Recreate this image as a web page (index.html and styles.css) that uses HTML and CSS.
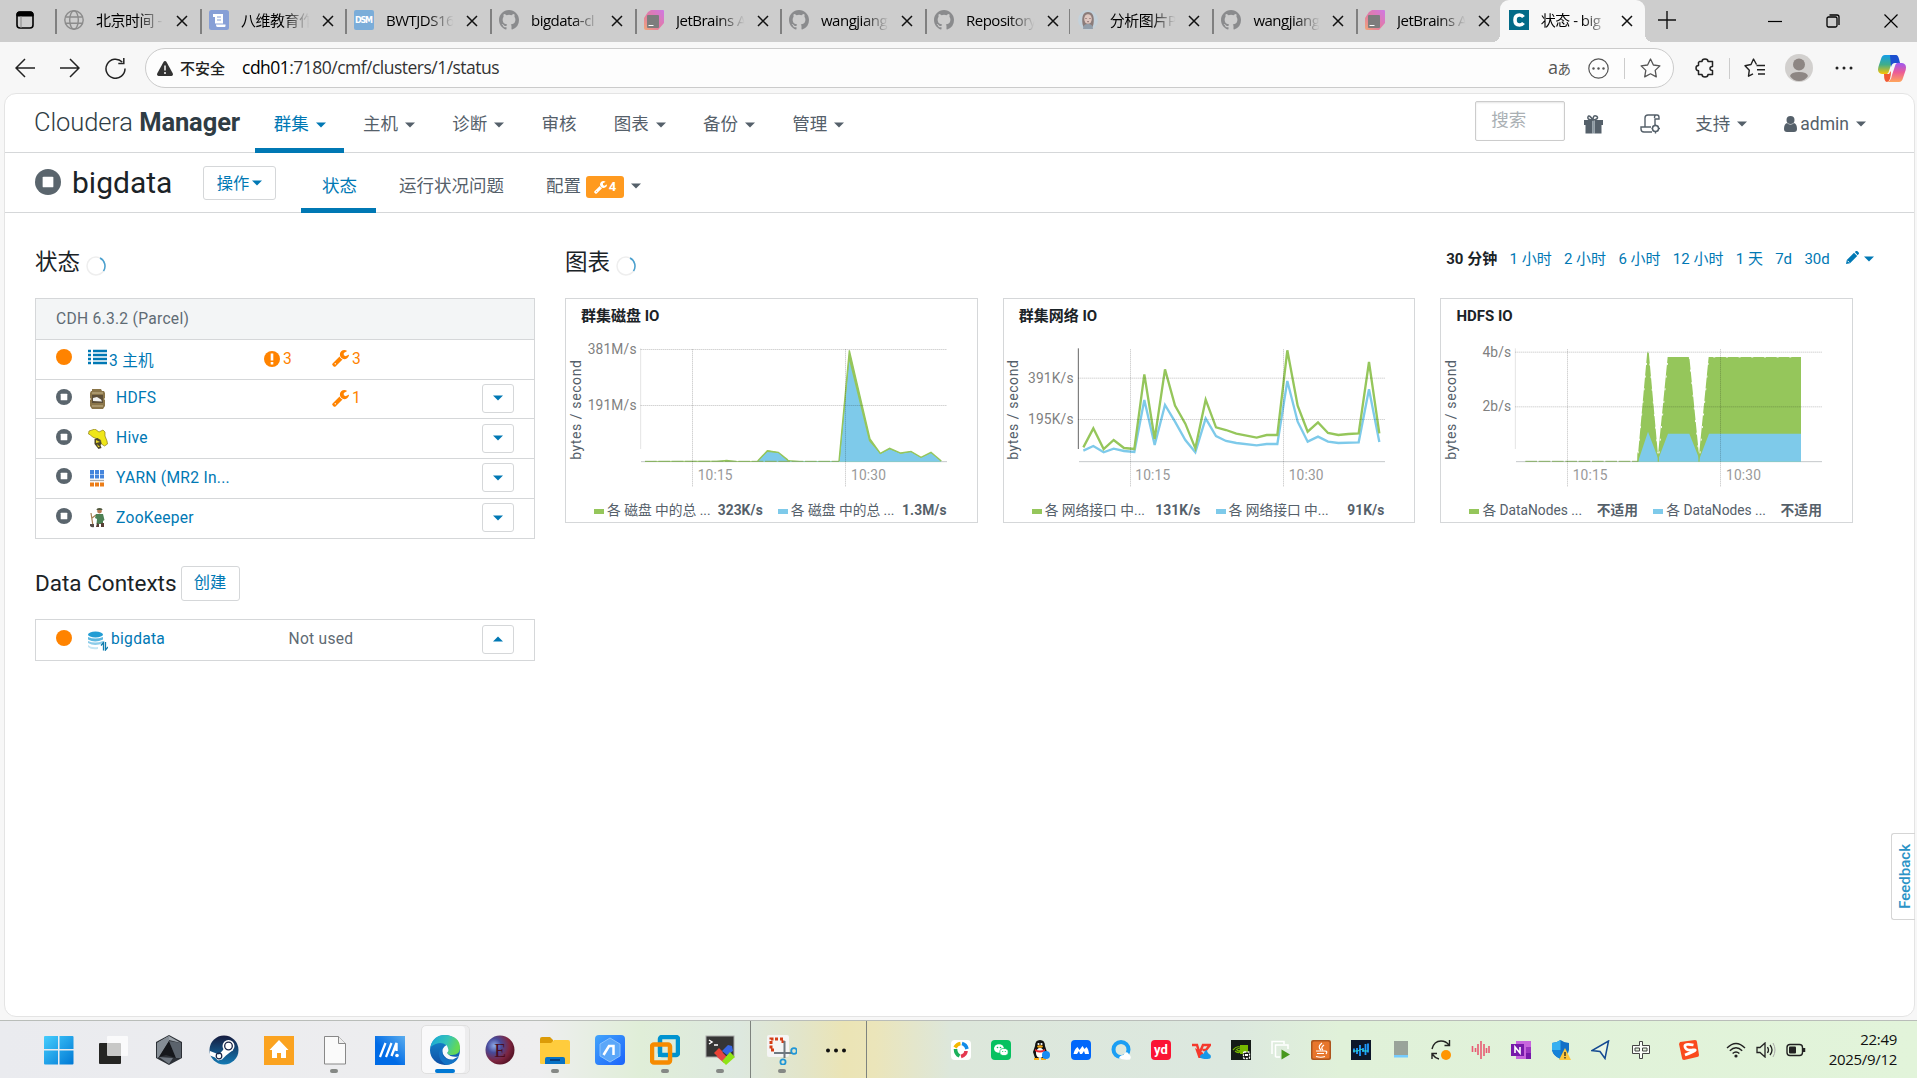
FILE: index.html
```html
<!DOCTYPE html>
<html lang="zh-CN">
<head>
<meta charset="utf-8">
<title>状态 - bigdata</title>
<link rel="stylesheet" href="styles.css">
</head>
<body>
<svg class="defs" width="0" height="0">
  <symbol id="github" viewBox="0 0 16 16"><path fill="#8a8b8d" d="M8 0C3.58 0 0 3.58 0 8c0 3.54 2.29 6.53 5.47 7.59.4.07.55-.17.55-.38 0-.19-.01-.82-.01-1.49-2.01.37-2.53-.49-2.69-.94-.09-.23-.48-.94-.82-1.13-.28-.15-.68-.52-.01-.53.63-.01 1.08.58 1.23.82.72 1.21 1.87.87 2.33.66.07-.52.28-.87.51-1.07-1.78-.2-3.64-.89-3.64-3.95 0-.87.31-1.59.82-2.15-.08-.2-.36-1.02.08-2.12 0 0 .67-.21 2.2.82a7.6 7.6 0 0 1 4 0c1.53-1.04 2.2-.82 2.2-.82.44 1.1.16 1.92.08 2.12.51.56.82 1.27.82 2.15 0 3.07-1.87 3.75-3.65 3.95.29.25.54.73.54 1.48 0 1.07-.01 1.93-.01 2.2 0 .21.15.46.55.38A8 8 0 0 0 16 8c0-4.42-3.58-8-8-8z"/></symbol>
  <symbol id="jetbrains" viewBox="0 0 20 20"><linearGradient id="jb" x1="0" y1="1" x2="1" y2="0"><stop offset="0" stop-color="#efa878"/><stop offset=".45" stop-color="#e27ba2"/><stop offset="1" stop-color="#cf78e4"/></linearGradient><path fill="url(#jb)" d="M7 0h12q1 0 1 1v12l-6 7H2q-2 0-2-2V8l4-6z"/><rect x="3" y="5" width="12" height="13" rx="1" fill="#7d7d7d"/><path d="M4.500 15.500h5" stroke="#fff" stroke-width="1"/></symbol>
  <symbol id="close" viewBox="0 0 12 12"><path d="M1 1l10 10M11 1L1 11" stroke="#111" stroke-width="1.500" fill="none"/></symbol>
  <symbol id="stopped" viewBox="0 0 16 16"><circle cx="8" cy="8" r="8" fill="#5a656d"/><rect x="4.700" y="4.700" width="6.600" height="6.600" rx=".6" fill="#fff"/></symbol>
  <symbol id="dot" viewBox="0 0 16 16"><circle cx="8" cy="8" r="8" fill="#ff8300"/></symbol>
  <symbol id="wrench" viewBox="0 0 1664 1664"><path fill="currentColor" d="M384 1344q0-26-19-45t-45-19-45 19-19 45 19 45 45 19 45-19 19-45zm644-420l-682 682q-37 37-90 37-52 0-91-37L59 1498q-38-36-38-90 0-53 38-91l681-681q39 98 114.500 173.500T1028 924zm634-435q0 39-23 106-47 134-164.500 217.500T1216 896q-185 0-316.500-131.500T768 448t131.500-316.500T1216 0q58 0 121.500 16.500T1445 63q16 11 16 28t-16 28l-293 169v224l193 107q5-3 79-48.500t135.500-81T1630 454q15 0 23.500 10t8.500 25z"/></symbol>
  <symbol id="caret" viewBox="0 0 10 6"><path fill="currentColor" d="M0 .5h10L5 5.500z"/></symbol>
</svg>

<header class="tabstrip">
  <div class="tab-menu"><svg width="18" height="18" viewBox="0 0 18 18"><rect x="1" y="1" width="16" height="16" rx="3" fill="none" stroke="#000" stroke-width="1.600"/><path d="M1 5V3q0-2 2-2h12q2 0 2 2v2z" stroke="#000" fill="#000"/><path d="M5 5v12" stroke="#888" stroke-width="1"/></svg></div>
  <div class="tab"><svg class="fav" viewBox="0 0 20 20"><g fill="none" stroke="#8b8b8b" stroke-width="1.400"><circle cx="10" cy="10" r="9.200"/><ellipse cx="10" cy="10" rx="4.300" ry="9.200"/><path d="M1.500 7h17M1.500 13.200h17"/></g></svg><span class="label">北京时间 -</span><svg class="x"><use href="#close"/></svg></div>
  <div class="tab"><svg class="fav" viewBox="0 0 20 20"><rect width="20" height="20" rx="2.500" fill="#879fd6"/><path d="M4 4h10v9.500H6V7H4zM7 14.500h9.500V16q0 1-1 1h-7Q7 17 7 15z" fill="#fff"/><path d="M8 7h4M8 10h4" stroke="#879fd6"/></svg><span class="label">八维教育作</span><svg class="x"><use href="#close"/></svg></div>
  <div class="tab"><svg class="fav" viewBox="0 0 20 20"><rect width="20" height="20" rx="2" fill="#7badd9"/><text x="10" y="13" text-anchor="middle" textLength="18" class="dsm">DSM</text></svg><span class="label">BWTJDS16</span><svg class="x"><use href="#close"/></svg></div>
  <div class="tab"><svg class="fav"><use href="#github"/></svg><span class="label">bigdata-cl</span><svg class="x"><use href="#close"/></svg></div>
  <div class="tab"><svg class="fav"><use href="#jetbrains"/></svg><span class="label">JetBrains A</span><svg class="x"><use href="#close"/></svg></div>
  <div class="tab"><svg class="fav"><use href="#github"/></svg><span class="label">wangjiang</span><svg class="x"><use href="#close"/></svg></div>
  <div class="tab"><svg class="fav"><use href="#github"/></svg><span class="label">Repository</span><svg class="x"><use href="#close"/></svg></div>
  <div class="tab"><svg class="fav" viewBox="0 0 20 20"><circle cx="10" cy="10" r="10" fill="#c4d1da"/><path d="M4.500 14q-1.500-12 5.500-12t5.500 12l-1 3H5.500z" fill="#8b7c7a"/><ellipse cx="10" cy="9" rx="3.800" ry="4.800" fill="#dec7c0"/><path d="M5 19q0-5 5-5t5 5z" fill="#929eaa"/><path d="M7.500 8.500h1M11.500 8.500h1M9.300 11.700h1.500" stroke="#74575a"/></svg><span class="label">分析图片P</span><svg class="x"><use href="#close"/></svg></div>
  <div class="tab"><svg class="fav"><use href="#github"/></svg><span class="label">wangjiang</span><svg class="x"><use href="#close"/></svg></div>
  <div class="tab"><svg class="fav"><use href="#jetbrains"/></svg><span class="label">JetBrains A</span><svg class="x"><use href="#close"/></svg></div>
  <div class="tab active"><svg class="fav" viewBox="0 0 20 20"><rect width="20" height="20" fill="#036b88"/><path d="M14.500 7Q13 5 10.500 5 6 5 6 10t4.500 5q2.500 0 4-2" fill="none" stroke="#fff" stroke-width="3.600"/></svg><span class="label">状态 - big</span><svg class="x"><use href="#close"/></svg></div>
  <svg class="newtab" width="18" height="18" viewBox="0 0 18 18"><path d="M9 0v18M0 9h18" stroke="#111" stroke-width="1.400"/></svg>
  <div class="winctl">
    <svg width="14" height="14" viewBox="0 0 14 14"><path d="M0 7.500h14" stroke="#000" stroke-width="1.200"/></svg>
    <svg width="14" height="14" viewBox="0 0 14 14"><g fill="none" stroke="#000" stroke-width="1.300"><rect x="1" y="3" width="10" height="10" rx="1.500"/><path d="M3.500 1h7.500q2 0 2 2v8"/></g></svg>
    <svg width="14" height="14" viewBox="0 0 14 14"><path d="M.5.5l13 13M13.500.5l-13 13" stroke="#000" stroke-width="1.200"/></svg>
  </div>
</header>

<div class="toolbar">
  <div class="navbtns">
    <svg width="20" height="20" viewBox="0 0 20 20"><path d="M20 10H1M10 1L1 10l9 9"/></svg>
    <svg width="20" height="20" viewBox="0 0 20 20"><path d="M0 10h19M10 1l9 9-9 9"/></svg>
    <svg width="21" height="21" viewBox="0 0 21 21"><path d="M20 10.500A9.500 9.500 0 1 1 17.200 4M18.800 0v5.500h-5.500"/></svg>
  </div>
  <div class="omnibox">
    <svg width="16" height="15" viewBox="0 0 16 15"><path d="M8 0q1 0 1.500.9l6.200 11.400q.8 2.200-1.200 2.700H1.500q-2-.5-1.200-2.700L6.500.9Q7 0 8 0z" fill="#333"/><path d="M8 4.500v5M8 11v2" stroke="#fff" stroke-width="1.500"/></svg>
    <span class="insecure">不安全</span>
    <span class="url">cdh01<em>:7180/cmf/clusters/1/status</em></span>
    <span class="translate">a<small>あ</small></span>
    <svg class="dots" width="21" height="21" viewBox="0 0 21 21"><circle cx="10.500" cy="10.500" r="9.700" fill="none" stroke="#555" stroke-width="1.200"/><g fill="#555"><circle cx="5.500" cy="10.500" r="1.200"/><circle cx="10.500" cy="10.500" r="1.200"/><circle cx="15.500" cy="10.500" r="1.200"/></g></svg>
    <i class="bar"></i>
    <svg width="21" height="20" viewBox="0 0 21 20"><path d="M10.500 1l2.900 6 6.500.9-4.700 4.500 1.100 6.500-5.800-3.100-5.800 3.100 1.100-6.500L1.100 7.900 7.600 7z" fill="none" stroke="#555" stroke-width="1.300" stroke-linejoin="round"/></svg>
  </div>
  <div class="tools">
    <svg width="20" height="20" viewBox="0 0 20 20"><path d="M4.500 3.500H7Q7 1 10 1t3 2.500h4.500v5q-2.500 0-2.500 2t2.500 2v4H13Q13 19 10 19t-3-2.500H3.500v-3.800Q1 12.500 1 10t2.500-2.500V4.500z" fill="none" stroke="#222" stroke-width="1.500" stroke-linejoin="round"/></svg>
    <i class="bar"></i>
    <svg width="21" height="20" viewBox="0 0 21 20"><g fill="none" stroke="#222" stroke-width="1.400" stroke-linejoin="round"><path d="M12.500 6.500L9.500 1 7 6.500 1 7.700l4.300 4.500-.8 6L9 15.800M12.500 7.500H21M13 11.800h8M14 16h7"/></g></svg>
    <svg width="28" height="28" viewBox="0 0 28 28"><circle cx="14" cy="14" r="14" fill="#d2d0ce"/><circle cx="14" cy="10.500" r="6" fill="#8d8683"/><path d="M5 22q1-4 9-4t9 4q-3 5-9 5t-9-5z" fill="#8d8683"/></svg>
    <svg width="18" height="4" viewBox="0 0 18 4"><g fill="#222"><circle cx="2" cy="2" r="1.500"/><circle cx="9" cy="2" r="1.500"/><circle cx="16" cy="2" r="1.500"/></g></svg>
    <svg width="28" height="27" viewBox="0 0 28 27"><defs><linearGradient id="c1" x1="0" y1="0" x2="0" y2="1"><stop offset="0" stop-color="#149ee9"/><stop offset=".5" stop-color="#3fae8a"/><stop offset="1" stop-color="#ffc400"/></linearGradient><linearGradient id="c2" x1="0" y1="0" x2="0" y2="1"><stop offset="0" stop-color="#9b58f4"/><stop offset=".5" stop-color="#ec5c96"/><stop offset="1" stop-color="#ffa65b"/></linearGradient></defs><path d="M7 0h12q-4 1-5 7l-3 9q-1 4-5 3H4q-6-1-3-9l2-6q1-4 4-4z" fill="url(#c1)"/><path d="M12 0h6q2 0 3 4l1 4h-5q-3 0-4 4z" fill="#1c50d0"/><path d="M21 27H9q4-1 5-7l3-9q1-4 5-3h2q6 1 3 9l-2 6q-1 4-4 4z" fill="url(#c2)"/><path d="M6 19h5l2-3q0 10-4 11-3 0-3-8z" fill="#f15a35"/></svg>
  </div>
</div>

<main class="page">
  <nav class="topnav">
    <div class="brand"><span>Cloudera</span> <b>Manager</b></div>
    <a class="on">群集<svg class="caret"><use href="#caret"/></svg></a>
    <a>主机<svg class="caret"><use href="#caret"/></svg></a>
    <a>诊断<svg class="caret"><use href="#caret"/></svg></a>
    <a>审核</a>
    <a>图表<svg class="caret"><use href="#caret"/></svg></a>
    <a>备份<svg class="caret"><use href="#caret"/></svg></a>
    <a>管理<svg class="caret"><use href="#caret"/></svg></a>
    <div class="right">
      <div class="search">搜索</div>
      <svg class="gift" width="19" height="19" viewBox="0 0 19 19"><path d="M9 5Q3 5 4 2t5 3Q9-1 13 1.500 15 4 9 5z" fill="none" stroke="#55606a" stroke-width="1.500"/><path d="M0 5h8.500v13.500H1.500V10H0zM10.500 5H19v5h-1.500v8.500h-7z" fill="#55606a"/><path d="M8.500 6h2v12.500h-2z" fill="#8996a0"/></svg>
      <svg class="scroll" width="20" height="20" viewBox="0 0 20 20"><g fill="none" stroke="#55606a" stroke-width="1.400"><path d="M5 13V4q0-3 3-3h9q2 0 2 2.500V5h-4v7M8 1h8q-1.500 0-1.500 3M5 13H1v2q0 3 3 3h8M1 13h10"/><circle cx="15.500" cy="14.500" r="3"/><path d="M15.500 10.500v1M15.500 17.500v2M11.500 14.500h1M18.500 14.500h1.500M12.700 11.700l1 1M18.300 17.300l-1-1M18.300 11.700l-1 1M12.700 17.300l1-1"/></g></svg>
      <span class="support">支持<svg class="caret"><use href="#caret"/></svg></span>
      <span class="user"><svg width="13" height="16" viewBox="0 0 13 16"><circle cx="6.500" cy="4" r="4" fill="#55606a"/><path d="M3 7q3.500 3 7 0 3 1 3 6 0 3-3 3H3q-3 0-3-3 0-5 3-6z" fill="#55606a"/></svg>admin<svg class="caret"><use href="#caret"/></svg></span>
    </div>
  </nav>
  <div class="subnav">
    <svg class="state" width="26" height="26"><use href="#stopped"/></svg>
    <h1>bigdata</h1>
    <button class="btn actions">操作<svg class="caret"><use href="#caret"/></svg></button>
    <a class="on">状态</a>
    <a class="health">运行状况问题</a>
    <a class="config">配置<span class="badge"><svg width="13" height="13"><use href="#wrench"/></svg>4</span><svg class="caret"><use href="#caret"/></svg></a>
  </div>

  <div class="content">
    <section class="left">
      <h2>状态 <svg class="spin" viewBox="0 0 20 20"><circle cx="10" cy="10" r="9" fill="none" stroke="#eeeeee" stroke-width="1.500"/><path d="M14 2a9 9 0 0 1 3.500 13" fill="none" stroke="#4aa0cf" stroke-width="1.500"/></svg></h2>
      <div class="table">
        <div class="row head">CDH 6.3.2 (Parcel)</div>
        <div class="row">
          <svg class="st"><use href="#dot"/></svg>
          <svg class="ic list" viewBox="0 0 19 16"><path d="M0 2h3M5 2h14M0 6h3M5 6h14M0 10h3M5 10h14M0 14h3M5 14h14" stroke="#0078b4" stroke-width="2.500"/></svg>
          <a class="hosts">3 主机</a>
          <span class="alert"><svg width="16" height="16" viewBox="0 0 16 16"><circle cx="8" cy="8" r="8" fill="#ff8300"/><path d="M8 2.500v7M8 11v2.500" stroke="#fff" stroke-width="2.600"/></svg>3</span>
          <span class="cfg"><svg width="17" height="17"><use href="#wrench"/></svg>3</span>
        </div>
        <div class="row">
          <svg class="st"><use href="#stopped"/></svg>
          <svg class="ic" viewBox="0 0 20 20"><path d="M4 0h9l1 2h2l1 2v5l-1 1 1 1v6l-2 3H4l-2-3v-6l1-1-1-1V4l1-2h1z" fill="#8a7549"/><path d="M4 3h11v2H4zM4 16h11v2H4z" fill="#a9966b"/><path d="M4 6h11v8H4z" fill="#5c4e38"/><path d="M5 12V9l4-1 4 2.500 1 2z" fill="#f1f1ef"/></svg>
          <a>HDFS</a>
          <span class="cfg"><svg width="17" height="17"><use href="#wrench"/></svg>1</span>
          <button class="drop"><svg class="caret"><use href="#caret"/></svg></button>
        </div>
        <div class="row">
          <svg class="st"><use href="#stopped"/></svg>
          <svg class="ic" viewBox="0 0 20 20"><path d="M1 2l6-2 4 3 4-2 2 2v4l2 5 .5 3-3 2-3-2-1-4-3-1-5-2-2-2-2-1z" fill="#efe619" stroke="#8b7d16" stroke-width=".7"/><path d="M6.500 10l3-1 3 2 1 4-1 1 1 3-3 1-4-5z" fill="#4e4628"/><path d="M8 11l4 2-4 1zM9 15l3 3h-2z" fill="#e8d928"/></svg>
          <a>Hive</a>
          <button class="drop"><svg class="caret"><use href="#caret"/></svg></button>
        </div>
        <div class="row">
          <svg class="st"><use href="#stopped"/></svg>
          <svg class="ic" viewBox="0 0 20 20"><g fill="#4585dc"><path d="M2 2h4v4H2zM7 2h4v4H7zM12 2h4v4h-4zM2 6.500h4v4H2zM7 6.500h4v4H7zM12 6.500h4v4h-4z"/></g><path d="M2 12.500h14" stroke="#aaa" stroke-width="1.300"/><path d="M2 14.500h4v4H2zM7 14.500h4v4H7zM12 14.500h4v4h-4z" fill="#ec7d17"/></svg>
          <a>YARN (MR2 In...</a>
          <button class="drop"><svg class="caret"><use href="#caret"/></svg></button>
        </div>
        <div class="row">
          <svg class="st"><use href="#stopped"/></svg>
          <svg class="ic" viewBox="0 0 20 20"><path d="M3 5l2 13M8 7L4 10" stroke="#a77c50" stroke-width="1.200"/><circle cx="11.500" cy="3" r="2.400" fill="#b77a55"/><path d="M8.500 2q0-2 3-2t3 2z" fill="#515a40"/><path d="M8 6h7l1.500 6-1.500 1v3H8.500l.5-5-2-1z" fill="#4d8054"/><path d="M9 15l-1 4h3v-3zM13 15v4h3v-4z" fill="#583e35"/><path d="M2 16h4v3q-2 1-4-1z" fill="#554c48"/></svg>
          <a>ZooKeeper</a>
          <button class="drop"><svg class="caret"><use href="#caret"/></svg></button>
        </div>
      </div>
      <h2 class="ctx">Data Contexts <button class="btn">创建</button></h2>
      <div class="table">
        <div class="row">
          <svg class="st"><use href="#dot"/></svg>
          <svg class="ic db" viewBox="0 0 20 20"><path d="M0 14v2q3 3 10 2v-2q-7 1-10-2z" fill="#c4e5f3"/><path d="M0 10v2q7 4 15 0v-2q-8 3-15 0z" fill="#8bcbe9"/><path d="M0 6v2.500q7 4 15 0V6q-8 3-15 0z" fill="#5db7df"/><ellipse cx="7.500" cy="3.500" rx="7.500" ry="3" fill="#239dd4"/><path d="M15.500 19.500v-8l-2.500 3M17.500 11v8l2.500-3" fill="none" stroke="#0e7cae" stroke-width="1.300"/></svg>
          <a class="bd">bigdata</a>
          <span class="unused">Not used</span>
          <button class="drop up"><svg class="caret"><use href="#caret"/></svg></button>
        </div>
      </div>
    </section>

    <section class="charts">
      <div class="chead">
        <h2>图表 <svg class="spin" viewBox="0 0 20 20"><circle cx="10" cy="10" r="9" fill="none" stroke="#eeeeee" stroke-width="1.500"/><path d="M14 2a9 9 0 0 1 3.500 13" fill="none" stroke="#4aa0cf" stroke-width="1.500"/></svg></h2>
        <div class="ranges"><b>30 分钟</b><a>1 小时</a><a>2 小时</a><a>6 小时</a><a>12 小时</a><a>1 天</a><a>7d</a><a>30d</a>
          <span class="edit"><svg width="13" height="13" viewBox="0 0 13 13"><path d="M0 13l.8-4L8 1.800 11.200 5 4 12.200zM8.800 1L10 0q.8-.3 1.500.3l1.200 1.200q.6.700 0 1.500l-1 1.200z" fill="#0078b4"/><path d="M1.600 9.800l1.600 1.600" stroke="#fff"/></svg><svg class="caret"><use href="#caret"/></svg></span></div>
      </div>
      <div class="cards">
        <article class="card">
          <h3>群集磁盘 IO</h3>
          <svg class="plot" viewBox="48 300 1236 480">
            <path class="axis faint" d="M272 340V642"/><path class="axis" d="M273 680H1191"/>
            <path fill="#95c65b" d="M285 680V678L500 677 530 674 560 678H623L652 646 685 652 714 675 750 678H867L898 346 960 612 991 655 1019 640 1052 654 1083 649 1113 667 1143 652 1174 680z"/>
            <path fill="#7ecaea" d="M285 680H623L652 651 685 654 714 679H869L898 378 957 618 991 657 1019 643 1052 656 1083 651 1113 668 1143 654 1174 680z"/>
            <path class="zero" d="M285 679H867"/>
            <path class="series g thin" d="M867 678L898 346 960 612 991 655 1019 640 1052 654 1083 649 1113 667 1143 652 1174 678M623 678L652 647 685 652 714 675"/>
            <path class="grid" d="M272 343.500H1191M272 511.500H1191M427.500 343V757M886.500 343V757"/>
            <text class="tick" x="260" y="357" text-anchor="end">381M/s</text><text class="tick" x="260" y="525" text-anchor="end">191M/s</text>
            <text class="tick t" x="443" y="735">10:15</text><text class="tick t" x="903" y="735">10:30</text>
            <text class="unit" transform="translate(92 524) rotate(-90)">bytes / second</text>
          </svg>
          <div class="legend"><i class="g"></i><span>各 磁盘 中的总 ...</span><b>323K/s</b><i class="b"></i><span>各 磁盘 中的总 ...</span><b>1.3M/s</b></div>
        </article>
        <article class="card">
          <h3>群集网络 IO</h3>
          <svg class="plot" viewBox="42 300 1236 480">
            <path class="axis dark" d="M265 340V642"/><path class="axis" d="M267 680H1185"/>
            <path class="series b" d="M280 647L310 633 341 652 371 641 402 648 433 651 463 495 494 630 525 510 555 560 586 615 616 652 647 550 678 603 708 618 739 624 800 631 830 627 862 627 892 438 923 560 953 620 984 605 1014 620 1045 624 1106 622 1137 463 1168 621"/>
            <path class="series g" d="M280 637L310 580 341 642 371 615 402 639 433 642 463 418 494 612 525 403 555 512 586 566 616 640 647 494 678 577 708 585 739 596 800 608 830 600 862 600 892 346 923 512 953 590 984 562 1014 594 1045 600 1075 597 1106 595 1137 381 1168 595"/>
            <path class="grid" d="M265 429.500H1185M265 553.500H1185M421.500 343V757M880.500 343V757"/>
            <text class="tick" x="251" y="444" text-anchor="end">391K/s</text><text class="tick" x="251" y="567" text-anchor="end">195K/s</text>
            <text class="tick t" x="436" y="735">10:15</text><text class="tick t" x="896" y="735">10:30</text>
            <text class="unit" transform="translate(84 524) rotate(-90)">bytes / second</text>
          </svg>
          <div class="legend"><i class="g"></i><span>各 网络接口 中...</span><b>131K/s</b><i class="b"></i><span>各 网络接口 中...</span><b>91K/s</b></div>
        </article>
        <article class="card">
          <h3>HDFS IO</h3>
          <svg class="plot" viewBox="63 300 1236 480">
            <path class="axis faint" d="M286 340V642"/><path class="axis" d="M288 680H1206"/>
            <path fill="#95c65b" d="M652 680L682 348H686L714 660 743 366H808L837 660 866 366H1143V680z"/>
            <path fill="#7ecaea" d="M654 680L684 590 715 672 744 596H808L838 672 867 596H1143V680z"/>
            <path class="series g thin" d="M715 650V680M837 650V680M654 652V680"/>
            <path class="gaps" d="M654 655L683 348M686 348L714 655M717 655L744 366M808 366L836 655M840 655L866 366H1143"/>
            <path class="zero" d="M316 679H654"/>
            <path class="grid" d="M286 351.500H1206M286 515.500H1206M442.500 343V757M901.500 343V757"/>
            <text class="tick" x="274" y="366" text-anchor="end">4b/s</text><text class="tick" x="274" y="528" text-anchor="end">2b/s</text>
            <text class="tick t" x="458" y="735">10:15</text><text class="tick t" x="918" y="735">10:30</text>
            <text class="unit" transform="translate(108 524) rotate(-90)">bytes / second</text>
          </svg>
          <div class="legend"><i class="g"></i><span>各 DataNodes ...</span><b>不适用</b><i class="b"></i><span>各 DataNodes ...</span><b>不适用</b></div>
        </article>
      </div>
    </section>
  </div>
  <div class="feedback">Feedback</div>
</main>

<footer class="taskbar">
  <div class="apps">
    <div><svg viewBox="0 0 30 30"><linearGradient id="w" x1="0" y1="0" x2="1" y2="1"><stop offset="0" stop-color="#45cdfd"/><stop offset="1" stop-color="#0078d4"/></linearGradient><path fill="url(#w)" d="M0 2q0-1 1-1h13v13H0zM15.500 1h13q1 0 1 1v12h-14zM0 15.500h14v14H1q-1 0-1-1zM15.500 15.500h14v13q0 1-1 1h-13z"/></svg></div>
    <div><svg viewBox="0 0 30 30"><rect x="0" y="8" width="22" height="21" rx="1" fill="#252523"/><rect x="8" y="1" width="21" height="20" rx="1" fill="#fff" opacity=".75"/></svg></div>
    <div><svg viewBox="0 0 30 30"><path d="M15 0l13 7v16l-13 7L2 23V7z" fill="#2c3036"/><path d="M15 1l12 7-12-3L3 8z" fill="#9ca3aa"/><path d="M15 1v5L5 22l-2 1V8z" fill="#858d95"/><path d="M5 22l14 1-4 6z" fill="#6e767f"/><path d="M15 6l7 17-10-3-7 2z" fill="#15171b"/><path d="M15 6l12 2v15l-5 0z" fill="#5b636c"/></svg></div>
    <div><svg viewBox="0 0 30 30"><linearGradient id="s" x1="0" y1="0" x2="0" y2="1"><stop offset="0" stop-color="#151b3e"/><stop offset="1" stop-color="#147ab4"/></linearGradient><circle cx="15" cy="15" r="14.500" fill="url(#s)"/><path d="M1 16l9 3.500 4-4.500 2-4 8 4-7 5.500-4 4-4 1-3-3-5-2z" fill="#fff"/><circle cx="19.500" cy="11" r="6" fill="#fff"/><circle cx="19.500" cy="11" r="3.800" fill="#fff" stroke="#182445" stroke-width="1.300"/><circle cx="10" cy="21" r="2.800" fill="none" stroke="#182445" stroke-width="1.200"/></svg></div>
    <div><svg viewBox="0 0 30 30"><path fill="#fba320" d="M0 1h30v29H0z"/><path fill="#fff" d="M15 5l9.500 10H22v8h-5v-5h-4v5H8v-8H5.500z"/></svg></div>
    <div class="run"><svg viewBox="0 0 30 30"><path d="M4.500 1.500h14l7 7v20.500h-21z" fill="#fafafa" stroke="#888"/><path d="M18.500 1.500v7h7" fill="#eee" stroke="#888"/></svg></div>
    <div><svg viewBox="0 0 30 30"><linearGradient id="m" x1="0" y1="1" x2="1" y2="0"><stop offset=".4" stop-color="#006be6"/><stop offset="1" stop-color="#5badee"/></linearGradient><path fill="url(#m)" d="M0 1h30v29H0z"/><path d="M5 22l5.500-14M11 22l5.500-14" fill="none" stroke="#fff" stroke-width="2.200"/><path d="M16.500 21l5-13v8" fill="none" stroke="#fff" stroke-width="2.400"/><circle cx="22" cy="20.500" r="1.800" fill="#fff"/></svg></div>
    <div class="run on"><svg viewBox="0 0 30 30"><linearGradient id="e1" x1="0" y1="0" x2="1" y2=".3"><stop offset="0" stop-color="#16a5dc"/><stop offset=".6" stop-color="#35c4b7"/><stop offset="1" stop-color="#64d955"/></linearGradient><linearGradient id="e2" x1="0" y1="0" x2="0" y2="1"><stop offset="0" stop-color="#178bd0"/><stop offset="1" stop-color="#0d4fa5"/></linearGradient><circle cx="15" cy="15" r="15" fill="url(#e2)"/><path d="M.5 12Q3 0 15 0q15 1 15 13 0 7-8 7-4 0-5-2 3-4-1-8Q10 5 .5 12z" fill="url(#e1)"/><path d="M12 15q-1 9 9 10 5 0 8-3-5 8-13 8-7-4-7-12 1-6 6-7-3 2-3 4z" fill="#1473c5"/><path d="M16.500 10Q11 13 13 19q3 6 10 5.500l5.500-3Q21 23 17 18q3-3-.5-8z" fill="#f7fafc"/></svg></div>
    <div><svg viewBox="0 0 30 30"><radialGradient id="r" cx=".3" cy=".35" r=".7"><stop offset="0" stop-color="#8daae8"/><stop offset=".35" stop-color="#474a9a"/><stop offset=".75" stop-color="#7e2540"/><stop offset="1" stop-color="#5b1529"/></radialGradient><circle cx="15" cy="15" r="14.500" fill="url(#r)"/><text x="15" y="22" text-anchor="middle" class="e">E</text></svg></div>
    <div class="run"><svg viewBox="0 0 30 30"><path d="M0 4q0-2 2-2h8l3 3v5H0z" fill="#dc9b08"/><path d="M0 8h11l3-3h14q2 0 2 2v21q0 1-1 1H1q-1 0-1-1z" fill="#ffcc3d"/><path d="M5 29v-5q0-2 2-2h16q2 0 2 2v5z" fill="#0873c5"/><path d="M10 25h10" stroke="#07417f" stroke-width="2"/></svg></div>
    <div><svg viewBox="0 0 30 30"><linearGradient id="a" x1="0" y1="0" x2="1" y2="1"><stop offset="0" stop-color="#43a5fb"/><stop offset="1" stop-color="#1a63fb"/></linearGradient><rect width="30" height="30" rx="4" fill="url(#a)"/><path d="M15 3l10 6v12l-10 6-10-6V9z" fill="#5ba7f9" stroke="#8ac1fc"/><path d="M8.500 20l5.500-9h4.500v9" fill="none" stroke="#fff" stroke-width="2.500"/></svg></div>
    <div class="run"><svg viewBox="0 0 30 30"><rect x="10" y="2" width="18" height="18" rx="2" fill="none" stroke="#0093d0" stroke-width="4.500"/><rect x="2" y="9.500" width="18" height="18" rx="2" fill="none" stroke="#f68b00" stroke-width="4.500"/><path d="M10 12v8h8" fill="none" stroke="#0093d0" stroke-width="4"/></svg></div>
    <div class="run"><svg viewBox="0 0 30 30"><rect x="1" y="1" width="28" height="21" fill="#353535" stroke="#aaa"/><path d="M4 5l3 2-3 2M9 10h4" fill="none" stroke="#fff" stroke-width="1.500"/><path d="M9 18l5-5 4 4-5 5z" fill="#ea4235"/><path d="M17 16l6-6 4 1 1 5-6 4z" fill="#3866e2"/><path d="M12 22l5-5 6 6-4 5z" fill="#e54646"/><path d="M19 24l6-7 5 5-9 8-4-4z" fill="#8fe416"/></svg></div>
  </div>
  <div class="pinned">
    <div class="run"><svg viewBox="0 0 30 30"><rect x="0" y="0" width="22" height="22" rx="2" fill="#f5f5f5"/><path d="M11 4H4v11h4M13 4h3v4" fill="none" stroke="#d53c15" stroke-width="3" stroke-dasharray="3 1.500"/><path d="M17.500 6v17M7 18h18" stroke="#6f7880" stroke-width="2"/><circle cx="27" cy="16" r="2.800" fill="none" stroke="#2196d6" stroke-width="1.800"/><circle cx="16" cy="27" r="2.600" fill="none" stroke="#2196d6" stroke-width="1.800"/></svg></div>
    <div><svg viewBox="0 0 30 30"><g fill="#111"><circle cx="6" cy="15.500" r="2"/><circle cx="14" cy="15.500" r="2"/><circle cx="22" cy="15.500" r="2"/></g></svg></div>
  </div>
  <div class="tray">
    <svg viewBox="0 0 20 20"><rect width="20" height="20" rx="4" fill="#fff"/><g fill="none" stroke-width="3.600"><path d="M4 7.500Q6 4 9.500 3.500" stroke="#f3b700"/><path d="M11 3.500q4 1 5 5.500" stroke="#128be8"/><path d="M15 11q0 4-5 5.500" stroke="#e43850"/><path d="M4.500 9q0 5 4 7" stroke="#1bb05b"/></g></svg>
    <svg viewBox="0 0 20 20"><rect width="20" height="20" rx="4" fill="#07c160"/><ellipse cx="8" cy="8.500" rx="5" ry="4.300" fill="#fff"/><ellipse cx="13" cy="12" rx="4.200" ry="3.600" fill="#fff" stroke="#07c160" stroke-width=".7"/><g fill="#07c160"><circle cx="6.500" cy="7.500" r=".8"/><circle cx="9.500" cy="7.500" r=".8"/><circle cx="11.700" cy="11.500" r=".6"/><circle cx="14.300" cy="11.500" r=".6"/></g></svg>
    <svg viewBox="0 0 20 20"><path d="M4 6q0-6 5-6t5 6l2 6-2 6H4l-2-6z" fill="#111"/><ellipse cx="9" cy="13" rx="4" ry="5" fill="#fff"/><path d="M4 9q5 3 10 0v2q-5 3-10 0z" fill="#e52431"/><ellipse cx="9" cy="6.500" rx="3" ry="1.200" fill="#f8ab12"/><circle cx="7.500" cy="4" r="1.100" fill="#fff"/><circle cx="10.500" cy="4" r="1.100" fill="#fff"/><path d="M3 18h5v2H3zM10 18h5v2h-5z" fill="#f8ab12"/><circle cx="15" cy="15" r="4" fill="#198bf2"/></svg>
    <svg viewBox="0 0 20 20"><rect width="20" height="20" rx="4" fill="#0067fb"/><path d="M2.500 14q1-5 4-7l2 3 3-4 2 3 2-2q2 2 2.500 7h-4l-1-3-2 3H9l-1-3-2 3z" fill="#fff"/></svg>
    <svg viewBox="0 0 20 20"><circle cx="10" cy="9.500" r="7.500" fill="none" stroke="#1b9ef4" stroke-width="4"/><path d="M8 18.500q4 1.500 11 1 2-3-1-5-1-3-4-2l-1.500 2.500q-4 0-4.500 3.500z" fill="#fff"/></svg>
    <svg viewBox="0 0 20 20"><rect width="20" height="20" rx="4" fill="#fb1434"/><text x="10" y="14" text-anchor="middle" class="yd">yd</text></svg>
    <svg viewBox="0 0 20 20"><path d="M1 5h5l2.500 8L12 5h7l-4 5h-3.500" fill="none" stroke="#f5392d" stroke-width="2.500"/><path d="M4 8l3.500 10h3l2-5" fill="#f5392d"/><path d="M9 17q0-3 4-3.500 0-3 3-3.500 0 3 3.500 5 1.500 4-3 4-7 0-7.500-2z" fill="#1798e8"/></svg>
    <svg viewBox="0 0 20 20"><path fill="#151b17" d="M0 0h20v20H0z"/><path d="M9 5h8v9H9z" fill="#76b900"/><path d="M2 10q5-6 10-1-4 6-8 2M5 10q3-3 5 0-2 2-4 0" fill="none" stroke="#76b900" stroke-width="1.200"/><rect x="12.500" y="12" width="6" height="6.500" rx="1" fill="#111" stroke="#fff" stroke-width="1.300" stroke-dasharray="2 1"/><path d="M14 14h3v2h-3z" fill="#fff"/></svg>
    <svg viewBox="0 0 20 20"><path d="M1 14V1.500h12V4M4.500 17V5H17v4M4.500 17H9" fill="none" stroke="#fff" stroke-width="1.500"/><path d="M10.500 9.500l8.500 5-8.500 5z" fill="#47981c"/></svg>
    <svg viewBox="0 0 20 20"><rect width="20" height="20" rx="2" fill="#ad551d"/><rect x="1.500" y="1.500" width="17" height="17" rx="1.500" fill="#e8762c"/><path d="M11 3q-5 4-1 7M13 5q-4 3-1 5M5 11h9q3 0 1 3M6 13.500h7M5 16.500q5 1.500 9 0" fill="none" stroke="#fff" stroke-width="1.200"/></svg>
    <svg viewBox="0 0 20 20"><path fill="#0d172a" d="M0 0h20v20H0z"/><path d="M3 8.500v4M6 8v6M9 5v11M12 8v4M14.500 4v11M17 3.500v9" stroke="#1f9bff" stroke-width="1.800"/><path d="M2 11h5l3-2 3 2h4" fill="none" stroke="#2fe0c8"/></svg>
    <svg viewBox="0 0 20 20"><path fill="#9aa39a" d="M3 1h14v14H3z"/><path fill="#75ccff" d="M3 15h14v2.500H3z"/></svg>
    <svg viewBox="0 0 20 20"><path d="M1 9Q3 1 10 1q5 0 8 4M18.500 0v5.500h-5M1 19v-5.500h5M1 14q3 4 7 5" fill="none" stroke="#222" stroke-width="1.400"/><circle cx="15" cy="15" r="5" fill="#ff9500"/></svg>
    <svg viewBox="0 0 20 20"><path d="M1.500 6v6M4.500 8v4M7 4v11M10 1v18M13 4v12M15.500 8v5M18 6v7" stroke="#e85a72" stroke-width="1.600"/></svg>
    <svg viewBox="0 0 20 20"><path fill="#c765dd" d="M5 1h15v18H5z"/><path fill="#9a35c0" d="M15 7h5v6h-5z"/><path fill="#7719aa" d="M15 13h5v6h-5zM0 4h13v12H0z"/><path d="M4 13V7l5 6V7" fill="none" stroke="#fff" stroke-width="1.600"/></svg>
    <svg viewBox="0 0 20 20"><path d="M9.500 0q4 3 8.500 3v7q-1 6-8.500 9Q2 16 1 10V3q4.500 0 8.500-3z" fill="#1270c8"/><path d="M9.500 0v10H1V3q4.500 0 8.500-3z" fill="#36b0f1"/><path d="M9.500 10v9Q3 16 1 10z" fill="#1683d8"/><path d="M14 8l6 12H8z" fill="#ffc83d"/><path d="M14 12v4M14 17v1.500" stroke="#222" stroke-width="1.300"/></svg>
    <svg viewBox="0 0 20 20"><path d="M17.500 1L14 18.500l-5-7L1 10.500z" fill="#fff" fill-opacity=".3" stroke="#144a91" stroke-width="1.500"/></svg>
    <svg viewBox="0 0 20 20"><path fill-rule="evenodd" d="M8.500 1.500h3v4h7v8h-7v5h-3v-5h-7v-8h7zM4 8v3h4.500V8zM11.500 8v3H16V8z" fill="#fff" fill-opacity=".8" stroke="#444" stroke-width="1"/></svg>
    <svg class="sogou" viewBox="0 0 20 20"><path d="M1 2l15-2q2 0 2 2l2 13q0 2-2 2L5 20q-2 0-2-2L0 4z" fill="#fa4a1d"/><path d="M14.500 5Q5 3 6 7t8 3-8 5" fill="none" stroke="#fff" stroke-width="2.800"/></svg>
  </div>
  <div class="sys">
    <svg width="20" height="16" viewBox="0 0 20 16"><g fill="none" stroke="#222" stroke-width="1.400"><path d="M1 6q9-9 18 0M3.800 8.800q6.200-6 12.400 0M6.600 11.600q3.400-3 6.800 0"/></g><circle cx="10" cy="14" r="1.600" fill="#222"/></svg>
    <svg width="20" height="16" viewBox="0 0 20 16"><path d="M1 5.500h3L9 1v14l-5-4.500H1z" fill="none" stroke="#222" stroke-width="1.300"/><path d="M11.500 5q2 3 0 6M14 3q4 5 0 10" fill="none" stroke="#222" stroke-width="1.300"/><path d="M17 1q4 7 0 14" fill="none" stroke="#aaa"/></svg>
    <svg width="20" height="14" viewBox="0 0 20 14"><rect x="1" y="1.500" width="15.500" height="11" rx="3" fill="none" stroke="#222" stroke-width="1.400"/><rect x="3" y="3.500" width="7" height="7" rx="1" fill="#222"/><path d="M18 5v4" stroke="#222" stroke-width="2.500"/></svg>
  </div>
  <div class="clock"><span>22:49</span><span>2025/9/12</span></div>
</footer>
</body>
</html>
```
FILE: styles.css
```css
* { box-sizing: border-box; }
body {
  margin: 0;
  width: 1917px;
  height: 1078px;
  overflow: hidden;
  display: flex;
  flex-direction: column;
  background: #f7f7f7;
  font-family: Roboto, "Noto Sans CJK SC", sans-serif;
  color: #1b2327;
}
svg { display: block; flex: none; }
.defs { position: absolute; }
h1, h2, h3 { margin: 0; font-weight: 400; }
button { font: inherit; background: #fff; border: 1px solid #d5d7d9; border-radius: 3px; padding: 0; }
.caret { width: 10px; height: 6px; }

/* browser tabs */
.tabstrip {
  height: 42px;
  flex: none;
  display: flex;
  background: #cdcdcd;
  font: 15px/20px "Open Sans", "Noto Sans CJK SC", sans-serif;
  color: #000;
}
.tab-menu { width: 55px; padding: 11px 0 0 16px; }
.tab {
  width: 145px;
  flex: none;
  display: flex;
  align-items: center;
  height: 42px;
  padding: 0 12px 2px 9px;
  position: relative;
}
.tab:nth-child(n+8) { width: 143.700px; }
.tab:not(.active)::before {
  content: "";
  position: absolute;
  left: 0; top: 9px;
  width: 1.500px; height: 25px;
  background: #808080;
}
.tab .fav { width: 20px; height: 20px; }
.tab .label {
  margin-left: 12px;
  width: 70px;
  white-space: nowrap;
  letter-spacing: -.5px;
  -webkit-mask-image: linear-gradient(90deg, #000 60%, transparent 98%);
  mask-image: linear-gradient(90deg, #000 60%, transparent 98%);
}
.tab .x { width: 12px; height: 12px; margin-left: 11px; margin-top: 2px; }
.tab.active { width: 145px; background: #f7f7f7; border-radius: 9px 9px 0 0; }
.tab.active::before, .tab.active::after {
  content: "";
  position: absolute;
  bottom: 0;
  width: 8px; height: 8px;
}
.tab.active::before { left: -8px; background: radial-gradient(circle at 0 0, transparent 8px, #f7f7f7 8px); }
.tab.active::after { right: -8px; background: radial-gradient(circle at 100% 0, transparent 8px, #f7f7f7 8px); }
.newtab { margin: 11px 0 0 13px; }
.winctl { margin: 14px 19px 0 auto; display: flex; gap: 44px; }
.dsm { font: bold 8px "DejaVu Sans"; fill: #fff; }

/* address bar */
.toolbar { height: 51px; flex: none; display: flex; align-items: flex-start; padding-top: 6px; }
.navbtns { width: 145px; height: 40px; display: flex; align-items: center; gap: 25px; padding-left: 15px; }
.navbtns path { fill: none; stroke: #222; stroke-width: 1.500; }
.omnibox {
  width: 1529px; height: 40px;
  border: 1px solid #cbcbcb;
  border-radius: 20px;
  background: #fdfdfd;
  display: flex;
  align-items: center;
  padding: 0 12px 0 11px;
  font-family: "Open Sans", "Noto Sans CJK SC", sans-serif;
}
.insecure { font-size: 15px; font-weight: 500; margin: -2px 0 0 7px; color: #222; }
.url { font-size: 17.500px; margin: -2px 0 0 17px; color: #000; letter-spacing: -.520px; }
.url em { font-style: normal; color: #333; }
.translate { margin: -2px 0 0 auto; font-size: 18px; color: #555; width: 40px; letter-spacing: -.5px; }
.translate small { font-size: 13.500px; }
.bar { width: 1px; height: 21px; background: #ccc; }
.omnibox .bar { margin: 0 15px; }
.tools { height: 40px; display: flex; align-items: center; padding-left: 21px; }
.tools .bar { margin: 0 14px; }
.tools svg:nth-of-type(3) { margin: 0 22px 0 20px; }
.tools svg:nth-of-type(5) { margin-left: 25px; }

/* page */
.page {
  margin-left: 4px;
  width: 1911px; height: 924px;
  flex: none;
  background: #fff;
  border: 1px solid #e4e4e4;
  border-radius: 12px;
  position: relative;
}
.topnav, .subnav { display: flex; color: #55606a; font-size: 17.500px; }
.topnav { height: 59px; border-bottom: 1px solid #d5d7d9; line-height: 60px; }
.brand { width: 250px; padding-left: 29px; font-size: 25.500px; color: #2f3c44; white-space: nowrap; letter-spacing: -.1px; line-height: 57px; }
.brand span { font-weight: 300; }
.topnav a { padding: 0 18.650px; height: 59px; display: flex; align-items: center; }
.topnav a .caret { margin-left: 7px; margin-top: 2px; }
.topnav .on, .subnav .on { color: #0078b4; border-bottom: 5px solid #0078b4; }
.topnav .on { padding-top: 5px; }
.right { margin-left: auto; display: flex; align-items: center; padding-right: 48px; }
.search { width: 90px; height: 40px; margin-top: -4px; border: 1px solid #ccc; border-radius: 2px; box-shadow: inset 0 1px 2px #e5e5e5; line-height: 36px; padding-left: 15px; color: #aab0b4; }
.gift { margin: 2px 0 0 19px; }
.scroll { margin: 2px 0 0 37px; }
.support, .user { display: flex; align-items: center; margin-top: 1px; }
.support { margin-left: 35px; }
.support .caret, .user .caret { margin-left: 7px; margin-top: 1px; }
.user { margin-left: 37px; }
.user svg:first-child { margin-right: 3px; }
.subnav { height: 60px; border-bottom: 1px solid #d5d7d9; }
.state { margin: 16px 11px 0 30px; }
.subnav h1 { width: 131px; font-size: 30px; line-height: 59px; color: #1b2327; }
.btn { color: #0078b4; font-size: 16.250px; }
.actions { width: 73px; height: 34px; margin: 13px 25px 0 0; padding-bottom: 2px; display: flex; align-items: center; justify-content: center; gap: 3px; }
.actions .caret { margin-top: 2px; }
.subnav a { height: 60px; padding: 0 19px 0 21px; line-height: 66px; }
.subnav .health { padding: 0 21px 0 23px; }
.subnav .config { display: flex; align-items: center; padding-top: 5px; line-height: 24px; }
.badge { display: flex; align-items: center; justify-content: center; gap: 2px; width: 38px; height: 22px; margin: 3px 7px 0 5px; border-radius: 3px; background: #ff9a1f; color: #fff; font-size: 13px; font-weight: 700; line-height: 22px; }

.content { display: flex; padding: 22px 0 0 30px; gap: 30px; }
.left { width: 500px; }
h2 { font-size: 22.500px; height: 63px; padding-top: 12px; line-height: 30px; display: flex; gap: 6px; }
.spin { width: 20px; height: 20px; margin-top: 8.500px; }
.table { border: 1px solid #d5d7d9; font-size: 15.600px; color: #5f6b74; letter-spacing: .280px; }
.row { height: 39.750px; display: flex; align-items: center; padding: 0 20px 1px 19.500px; position: relative; }
.row + .row { border-top: 1px solid #d5d7d9; }
.head { background: #f3f5f6; padding: 1px 20px 0; }
.st { width: 16px; height: 16px; margin-right: 16.500px; margin-top: -3px; }
.ic { width: 20px; height: 20px; margin-right: 8px; margin-top: 1px; }
.list { width: 19px; height: 16px; margin: -3px 2px 0 0; }
.db { margin-right: 4px; margin-top: 3px; }
.row a { color: #0078b4; }
.row .bd { margin-left: -1px; }
.alert, .cfg { display: flex; align-items: center; gap: 3px; color: #ff8300; }
.alert { position: absolute; left: 228px; }
.cfg { position: absolute; left: 296px; }
.unused { position: absolute; left: 252.500px; }
.drop { width: 32px; height: 29px; margin-left: auto; color: #0078b4; display: flex; align-items: center; justify-content: center; }
.up .caret { transform: rotate(180deg); }
.ctx { height: 80.500px; padding-top: 29px; gap: 4px; }
.ctx .btn { width: 59px; height: 35px; margin-top: -2px; }

.charts { width: 1314px; }
.chead { display: flex; justify-content: space-between; }
.ranges { display: flex; gap: 12.300px; font-size: 15px; padding: 14px 5px 0 0; line-height: 20px; white-space: nowrap; }
.ranges a { color: #0078b4; }
.edit { display: flex; gap: 5px; margin-left: 4px; color: #0078b4; }
.edit svg { margin-top: 2px; }
.edit .caret { margin-top: 7px; }
.cards { display: flex; gap: 25px; }
.card { width: 412.700px; height: 225px; border: 1px solid #d5d7d9; }
.card h3 { font-size: 15px; font-weight: 700; line-height: 20px; height: 36px; padding: 7px 0 0 15px; }
.plot { width: 412px; height: 160px; }
.axis { stroke: #c4c8ca; stroke-width: 3; fill: none; }
.axis.faint { stroke: #e4e4e4; }
.axis.dark { stroke: #666; }
.grid { stroke: #000; stroke-opacity: .26; stroke-width: 3; stroke-dasharray: 3 3; fill: none; }
.series { fill: none; stroke-width: 7; }
.series.g { stroke: #95c65b; }
.series.b { stroke: #7ecaea; }
.series.thin { stroke-width: 4; }
.gaps { fill: none; stroke: #fff; stroke-width: 3; stroke-dasharray: 6 32; }
.zero { stroke: #85ae62; stroke-width: 3; stroke-dasharray: 35 5; }
.tick { font-size: 41.250px; fill: #808080; letter-spacing: .5px; }
.tick.t { fill: #999; }
.unit { font-size: 42px; fill: #55606a; text-anchor: middle; letter-spacing: 1.800px; }
.legend { display: flex; align-items: center; font-size: 13.750px; line-height: 22px; color: #55606a; padding: 4px 30px 0 28px; white-space: nowrap; }
.legend i { width: 10px; height: 5px; margin-right: 3px; margin-top: 2px; }
.legend .g { background: #95c65b; }
.legend .b { background: #7ecaea; margin-left: 15px; }
.legend span { width: 104px; }
.legend b { flex: 1; text-align: right; letter-spacing: .1px; }

.feedback {
  position: absolute;
  right: -1px; top: 739px;
  width: 24px; height: 87px;
  border: 1px solid #d5d5d5;
  border-right: 0;
  border-radius: 3px 0 0 3px;
  writing-mode: sideways-lr;
  font-size: 15px;
  font-weight: 500;
  line-height: 27px;
  text-align: center;
  color: #2b93c6;
}

/* taskbar */
.taskbar {
  margin-top: 3px;
  flex: 1;
  border-top: 1px solid #b9bdb9;
  display: flex;
  background: linear-gradient(90deg, #eaebef 0, #eeeeef 540px, #e0eed8 640px, #dde8df 740px, #e2e5ca 800px, #ebe4b5 845px, #ebe5ba 875px, #dde7db 950px, #dce8df 1230px, #e0f1d9 1340px, #e2f4da 1917px);
}
.apps, .pinned { display: flex; align-items: center; }
.apps { padding-left: 31.500px; border-right: 1px solid #7e837e; width: 751px; }
.pinned { width: 116px; border-right: 1px solid #7e837e; padding-left: 3px; }
.apps > div, .pinned > div { width: 55.100px; height: 49px; flex: none; display: flex; align-items: center; justify-content: center; position: relative; }
.apps svg, .pinned svg { width: 30px; height: 30px; }
.run::after { content: ""; position: absolute; bottom: 1px; left: 23.500px; width: 8px; height: 4px; border-radius: 2px; background: #858885; }
.run.on::before { content: ""; position: absolute; inset: 0 2px 0 4px; background: #f9f9fa; border: 1px solid #e0e0e0; border-radius: 5px; box-shadow: inset -4px 0 #ededee; }
.run.on svg { position: relative; }
.run.on::after { width: 20px; left: 17.500px; background: #0078d4; }
.e { font: 19px "Liberation Serif"; fill: #4c0b1c; }
.tray { display: flex; align-items: center; gap: 20px; margin-left: 84px; }
.tray svg { width: 20px; height: 20px; }
.tray .sogou { margin-left: 8px; }
.yd { font: bold 13px Roboto; fill: #fff; }
.sys { display: flex; align-items: center; gap: 10px; margin-left: 27px; }
.clock { margin: 8px 20px 0 auto; display: flex; flex-direction: column; align-items: flex-end; font: 15px/20px "Open Sans", sans-serif; color: #111; letter-spacing: -.3px; }
```
